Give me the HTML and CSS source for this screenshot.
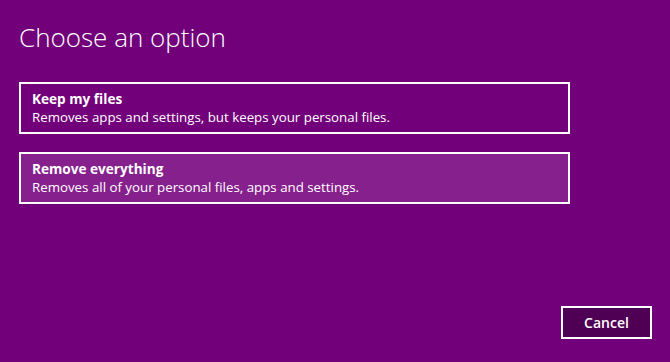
FILE: index.html
```html
<!DOCTYPE html>
<html>
<head>
<meta charset="utf-8">
<link rel="stylesheet" href="styles.css">
</head>
<body>
<div class="page">
  <h1 class="title">Choose an option</h1>
  <div class="options">
    <div class="option">
      <div class="option-name">Keep my files</div>
      <div class="option-desc">Removes apps and settings, but keeps your personal files.</div>
    </div>
    <div class="option option-hover">
      <div class="option-name">Remove everything</div>
      <div class="option-desc">Removes all of your personal files, apps and settings.</div>
    </div>
  </div>
  <div class="footer">
    <button class="cancel">Cancel</button>
  </div>
</div>
</body>
</html>
```
FILE: styles.css
```css
html, body {
  margin: 0;
  padding: 0;
  background: #72007a;
  width: 670px;
  height: 362px;
  overflow: hidden;
}
.page {
  font-family: "Open Sans", "Noto Sans", sans-serif;
  color: #ffffff;
  padding: 20px 0 0 19px;
  box-sizing: border-box;
  height: 362px;
  display: flex;
  flex-direction: column;
}
.title {
  margin: 0;
  font-size: 26px;
  font-weight: 300;
  line-height: 34px;
  letter-spacing: 0;
}
.options {
  margin-top: 28px;
  display: flex;
  flex-direction: column;
  gap: 18px;
}
.option {
  width: 551px;
  height: 52px;
  box-sizing: border-box;
  border: 2px solid #ffffff;
  padding: 5px 0 0 11px;
}
.option-hover {
  background: #86208c;
}
.option-name {
  font-size: 13.6px;
  font-weight: 700;
  line-height: 19px;
}
.option-desc {
  font-size: 13.3px;
  line-height: 19px;
}
.footer {
  margin-top: 102px;
  width: 633px;
  display: flex;
  justify-content: flex-end;
}
.cancel {
  width: 91px;
  height: 33px;
  box-sizing: border-box;
  border: 2px solid #ffffff;
  background: #500054;
  color: #ffffff;
  font-family: "Open Sans", "Noto Sans", sans-serif;
  font-size: 14px;
  font-weight: 600;
  padding: 0;
}
```
